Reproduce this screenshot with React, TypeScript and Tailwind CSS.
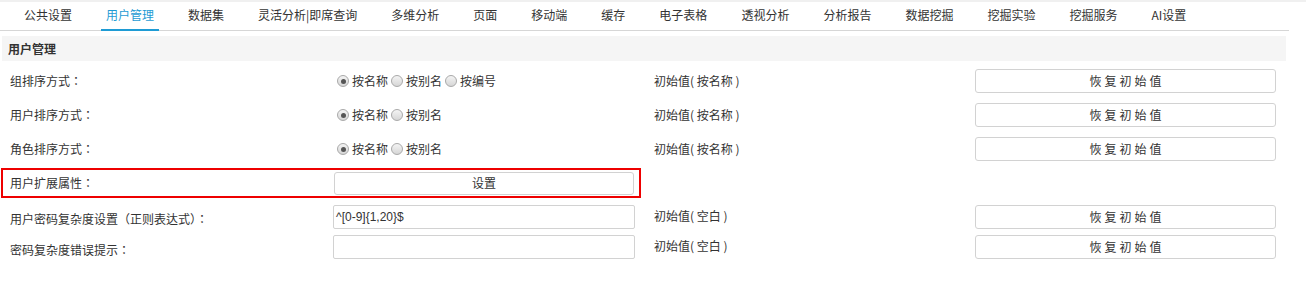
import React from 'react';

const tabs = [
  '公共设置', '用户管理', '数据集', '灵活分析|即席查询', '多维分析', '页面', '移动端', '缓存',
  '电子表格', '透视分析', '分析报告', '数据挖掘', '挖掘实验', '挖掘服务', 'AI设置',
];

// colon glyph centered in its cell, like the reference
function Colon() {
  return <span style={{ fontFamily: '"Noto Sans CJK JP", sans-serif' }}>：</span>;
}

function Radio({ checked, label }: { checked?: boolean; label: string }) {
  return (
    <span className="flex items-center">
      <span className="mx-[3px] flex h-[12px] w-[12px] items-center justify-center rounded-full border border-[#a9a9a9] bg-gradient-to-b from-[#f4f4f4] to-[#d6d6d6]">
        {checked && <span className="h-[5px] w-[5px] rounded-full bg-[#555]" />}
      </span>
      <span>{label}</span>
    </span>
  );
}

function ResetButton() {
  return (
    <button className="h-[24px] w-[301px] rounded-[3px] border border-[#d2d2d2] bg-white pl-[3px] tracking-[3px] text-[#333]">
      恢复初始值
    </button>
  );
}

function RadioRow({ label, options }: { label: string; options: string[] }) {
  return (
    <div className="mt-[10px] flex h-[24px] items-center first:mt-0">
      <div className="w-[334px] pl-[10px]">
        {label}
        <Colon />
      </div>
      <div className="flex w-[320px] items-center">
        {options.map((o, i) => (
          <Radio key={o} checked={i === 0} label={o} />
        ))}
      </div>
      <div className="w-[321px]">初始值( 按名称 )</div>
      <ResetButton />
    </div>
  );
}

export default function App() {
  return (
    <div
      className="relative h-[284px] w-[1309px] bg-white text-[12px] text-[#333]"
      style={{ fontFamily: '"Noto Sans CJK SC", "Liberation Sans", sans-serif' }}
    >
      <div className="h-[2px] w-[1306px] bg-[#f0f0f0]" />
      <div className="flex h-[29px] w-[1289px] items-end gap-[24px] border-b border-[#d6d6d6] pl-[19px]">
        {tabs.map((t, i) => (
          <div
            key={t}
            className={
              i === 1
                ? 'mb-[-1px] border-b-2 border-[#1e9bd4] px-[5px] pb-[5px] text-[#1e9bd4]'
                : 'px-[5px] pb-[6px]'
            }
          >
            {t}
          </div>
        ))}
      </div>
      <div className="ml-[2px] mt-[5px] flex h-[25px] w-[1284px] items-center bg-[#f5f5f5] pl-[6px] font-bold">
        用户管理
      </div>

      <div className="mt-[8px]">
        <RadioRow label="组排序方式" options={['按名称', '按别名', '按编号']} />
        <RadioRow label="用户排序方式" options={['按名称', '按别名']} />
        <RadioRow label="角色排序方式" options={['按名称', '按别名']} />
      </div>

      <div className="ml-[1px] mt-[7px] flex h-[30px] w-[640px] items-center border-2 border-[#ee0000]">
        <div className="w-[331px] pl-[7px]">
          用户扩展属性<Colon />
        </div>
        <button className="h-[23px] w-[300px] rounded-[3px] border border-[#d2d2d2] bg-white text-[#333]">
          设置
        </button>
      </div>

      <div className="mt-[7px] flex h-[24px] items-end">
        <div className="w-[333px] pb-[1px] pl-[10px]">
          用户密码复杂度设置<span style={{ fontFamily: '"Noto Sans CJK JP", sans-serif' }}>（正则表达式）</span>
          <Colon />
        </div>
        <div className="flex h-[24px] w-[302px] items-center rounded-[2px] border border-[#d2d2d2] pl-[2px]" style={{ fontFamily: '"Liberation Sans", sans-serif' }}>
          ^[0-9]{'{'}1,20{'}'}$
        </div>
        <div className="flex h-[24px] w-[340px] items-center pb-[3px] pl-[19px]">初始值( 空白 )</div>
        <ResetButton />
      </div>

      <div className="mt-[6px] flex h-[24px] items-end">
        <div className="w-[333px] pl-[10px]">
          密码复杂度错误提示<Colon />
        </div>
        <div className="h-[24px] w-[302px] rounded-[2px] border border-[#d2d2d2]" />
        <div className="flex h-[24px] w-[340px] items-center pb-[3px] pl-[19px]">初始值( 空白 )</div>
        <ResetButton />
      </div>
    </div>
  );
}
